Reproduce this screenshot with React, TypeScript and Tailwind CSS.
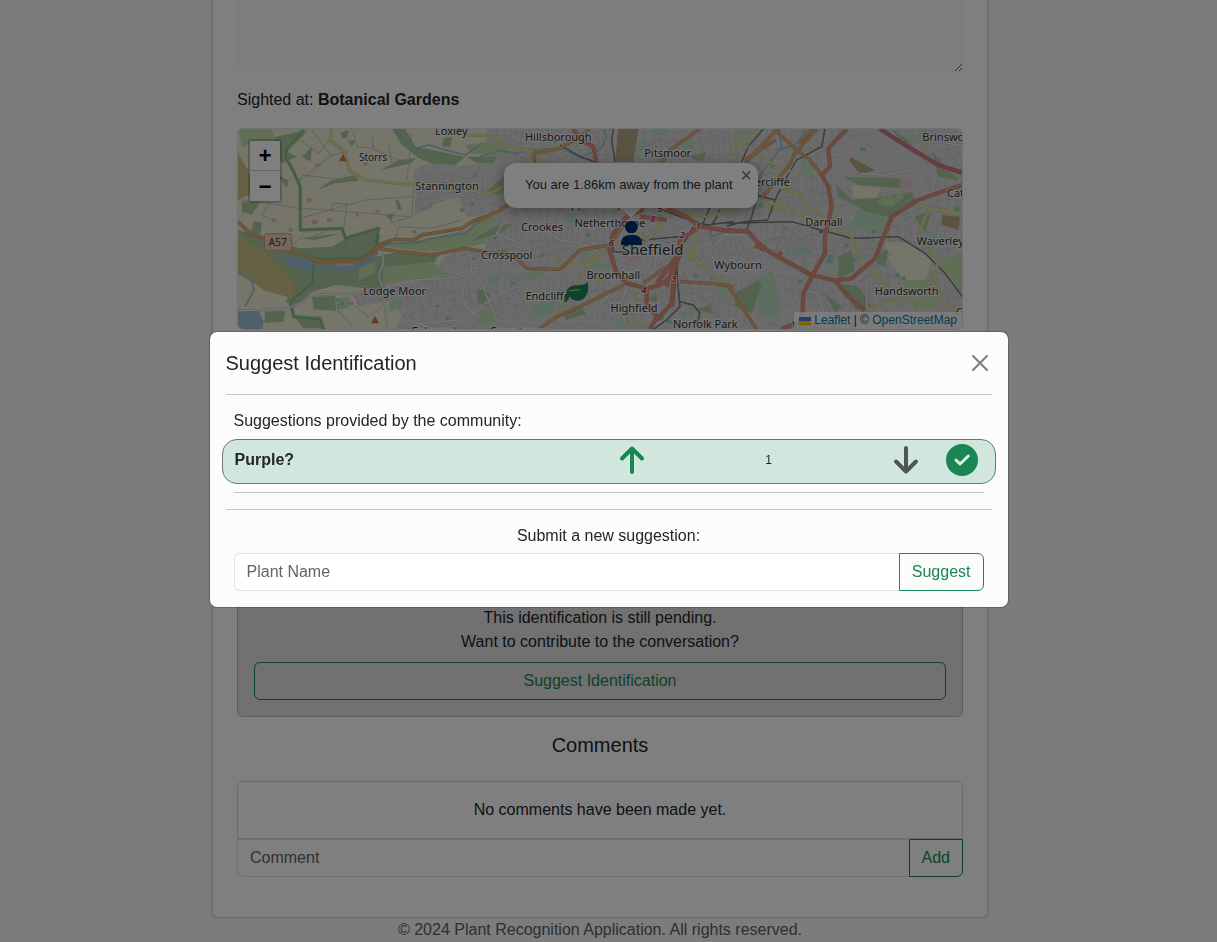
import React from "react";

type Shape = { fill: string; d: string };
type RoadKind = "trunk" | "primary" | "secondary" | "minor" | "motorway" | "rail" | "river" | "street" | "boundary";
type Road = { kind: RoadKind; d: string };
type Label = { text: string; x: number; y: number; anchor?: "start" | "middle" | "end"; size?: number };
type Tile = { offset: number; areas: Shape[]; roads: Road[]; labels: Label[] };

const C = {
  farm: "#ebead2",
  town: "#d8d7d8",
  wood: "#a6c79a",
  grass: "#c2dcac",
  park: "#b8dcbe",
  water: "#9cc0d6",
  moor: "#cdc088",
  retail: "#e0c8ce",
  school: "#8cd0b6",
  orchard: "#e8b89c",
  brown: "#b5a684",
};

const roadStyle: Record<RoadKind, { casing: string; fill: string; outer: number; inner: number }> = {
  motorway: { casing: "#c4607e", fill: "#d27890", outer: 13, inner: 9 },
  trunk: { casing: "#cc8872", fill: "#d9907c", outer: 13, inner: 9 },
  primary: { casing: "#c08e5c", fill: "#e0ae7e", outer: 10, inner: 6 },
  secondary: { casing: "#c2c288", fill: "#dedea4", outer: 9, inner: 6 },
  minor: { casing: "#bcbcbc", fill: "#ececec", outer: 7, inner: 4 },
  rail: { casing: "#6e6e6e", fill: "#808080", outer: 4, inner: 2 },
  river: { casing: "#94bad0", fill: "#a0c4d8", outer: 5, inner: 3 },
  street: { casing: "#b6b2b8", fill: "#c4c2c4", outer: 2, inner: 1 },
  boundary: { casing: "#a2c898", fill: "#80b07c", outer: 11, inner: 4 },
};

const order: RoadKind[] = ["street", "boundary", "river", "minor", "rail", "secondary", "primary", "trunk", "motorway"];

const west: Tile = {
  offset: 0,
  areas: [
    { fill: C.farm, d: "M0 0H760V660H0Z" },
    { fill: "url(#streets)", d: "M545 150 600 125 680 138 760 130V290L705 290 680 235 620 240 590 270 550 280Z" },
    { fill: "url(#streets)", d: "M640 410 700 385 760 400V660H470L510 590 480 540 380 560 360 520 450 500 540 490 620 470 615 440Z" },
    { fill: C.moor, d: "M18 100 45 145 62 190 50 225 18 240Z" },
    { fill: C.grass, d: "M18 27H120L140 100 90 60 30 80Z" },
    { fill: C.wood, d: "M130 50 225 30 215 45 165 95 195 110 150 130 120 90Z" },
    { fill: C.wood, d: "M30 245H85L60 285 30 275ZM65 305 90 308 85 345 55 340Z" },
    { fill: C.wood, d: "M18 330 100 350 200 385 300 380 350 350 440 330 435 370 410 415 500 395 620 405 600 440 470 480 450 510 310 495 240 515 190 560 160 545 185 510 160 460 110 440 80 405 30 390Z" },
    { fill: C.moor, d: "M18 345 65 375 110 410 165 455 190 500 180 535 100 512 18 460Z" },
    { fill: C.grass, d: "M440 375 570 360 700 330 760 290V370L690 385 600 395 520 390Z" },
    { fill: C.grass, d: "M380 440 430 425 430 460 380 480ZM455 440 600 425 650 465 540 480 450 495Z" },
    { fill: C.water, d: "M145 405 240 420 250 465 215 445 180 440ZM245 435 320 440 400 415 430 385 440 400 400 440 330 455 255 445Z" },
    { fill: C.water, d: "M18 572 80 572 95 605 90 630H18Z" },
    { fill: C.wood, d: "M98 575 160 572 155 605 98 608Z" },
    { fill: C.wood, d: "M240 530 310 528 312 572 245 568Z" },
    { fill: C.park, d: "M315 535 355 530 350 565 315 568Z" },
    { fill: C.wood, d: "M180 585 270 590 272 625 215 625Z" },
    { fill: C.wood, d: "M255 210 300 180 370 165 380 182 310 190ZM205 355 330 340 250 360ZM345 350 440 320 430 345 345 362Z" },
    { fill: C.wood, d: "M325 38 350 30 345 55 330 55ZM345 60 370 62 360 80ZM210 110 240 80 235 125ZM445 150 500 120 550 115 540 130ZM460 285 485 280 478 305ZM490 240 500 240 510 270 498 270ZM390 355 415 352 410 368ZM135 165 170 180 165 205ZM375 375 400 370 385 385Z" },
    { fill: C.wood, d: "M480 27H520L550 80 600 90 700 110 670 135 600 130 560 115 510 75ZM635 55 660 50 655 80 630 80Z" },
    { fill: C.orchard, d: "M250 130h14v10h-14zM225 235h14v12h-14zM240 300h18v12h-18zM120 295h12v10h-12zM285 295h14v10h-14zM370 280h10v10h-10zM430 270h12v8h-12zM170 325h12v10h-12zM115 355h10v8h-10zM395 128h12v8h-12zM350 370h14v10h-14zM540 330h12v10h-12zM260 600h14v10h-14zM350 545h14v10h-14z" },
    { fill: C.retail, d: "M310 430 370 425 365 437 315 440Z" },
    { fill: C.school, d: "M312 535h10v8h-10zM325 545h10v10h-10zM315 552h8v10h-8zM685 265h12v10h-12zM725 160h10v10h-10zM715 250h12v8h-12zM715 412h18v8h-18zM610 555h12v8h-12zM640 590h14v10h-14zM690 530h10v8h-10z" },
    { fill: C.park, d: "M470 545 505 535 515 560 475 575Z" },
  ],
  roads: [
    { kind: "street", d: "M18 238 110 250 205 265 345 275 530 290M110 250 90 285 140 310M300 275V250L345 252 335 320M205 295 400 240 540 230M365 40 375 80 425 85 420 50M200 185 300 105 350 95M200 185 210 165 340 180M205 60 260 100 300 50M240 30 300 110M540 40 525 180M470 70 480 130M230 355 290 330 330 320M185 375 220 335M350 395 380 365M420 85 520 130M330 490 320 430M310 560 360 620M370 560 410 590 450 560M545 285 600 250 640 240M470 310 540 290 545 190M490 360 500 320 600 325 690 300" },
    { kind: "boundary", d: "M215 30 165 85 160 110 185 155 205 200 205 330 330 325 340 355 440 325 430 365M440 345 430 390 380 415 250 415M245 425 240 490 175 545 185 590 265 600 275 630" },
    { kind: "river", d: "M495 27 510 60 550 85 590 75 640 90 700 105 750 70M18 460 60 480 65 510 40 560M760 290 700 340 600 355 545 370 470 370 440 385" },
    { kind: "minor", d: "M18 572 100 570 165 565 215 545 240 525 370 520 460 505 550 480 650 475 720 445 760 440M450 395 455 430 440 465 450 500 460 570 465 625M510 530 530 600 600 625M715 400 720 460 690 500 700 560 740 590M560 610 680 600 760 560" },
    { kind: "secondary", d: "M300 27 295 60 335 95 355 155 400 180 520 193 620 190 700 205 760 225M705 46H760" },
    { kind: "primary", d: "M18 305 60 345 100 355M165 390 230 410 260 425 380 425 410 410 440 385 500 395 600 405 700 385 760 395M420 390 450 370 490 358 545 360 570 345 690 325 720 305 760 290" },
  ],
  labels: [
    { text: "Loxley", x: 658, y: 46 },
    { text: "Storrs", x: 423, y: 122, size: 30 },
    { text: "Stannington", x: 645, y: 210 },
    { text: "Lodge Moor", x: 488, y: 524 },
    { text: "Fulwood", x: 605, y: 646 },
  ],
};

const centre: Tile = {
  offset: 744,
  areas: [
    { fill: "url(#streets)", d: "M16 0H760V660H16Z" },
    { fill: C.grass, d: "M-44 75 60 60 100 100 60 110 -30 100ZM130 90 240 75 230 100 150 115ZM45 230 110 160 100 215 60 240ZM-30 305 70 270 40 310 -20 345Z" },
    { fill: C.wood, d: "M20 215 90 150 110 160 60 225ZM-40 110 50 110 40 130 -10 130ZM330 190 390 215 350 240ZM-30 365 40 320 100 310 60 340Z" },
    { fill: C.brown, d: "M415 27H475L460 125H405Z" },
    { fill: C.park, d: "M475 60H500L495 90H470ZM525 110 545 108 540 128 520 128ZM600 60 640 50 640 85 610 90ZM510 27H570L560 45H520ZM260 280 290 285 290 310 260 305ZM300 400 325 395 330 420ZM330 425 400 430 380 450 340 445ZM100 480 180 440 210 450 160 480Z" },
    { fill: C.park, d: "M160 555 230 540 215 580 150 600ZM30 460 60 470 55 500 25 490ZM590 590 640 560 640 590ZM710 490 760 480V530H720ZM600 330 640 360 620 370ZM690 340 720 370 700 380ZM410 590 450 600 440 625H410Z" },
    { fill: C.grass, d: "M340 480 380 460 400 475 360 490ZM-20 580 40 560 60 590 20 620 -10 610ZM620 400 645 390 650 430 625 425Z" },
    { fill: C.wood, d: "M-10 505 30 520 20 560 -5 550ZM240 580 300 560 320 580 260 600ZM640 570 690 555 700 580ZM500 535 530 520 530 550ZM620 110 680 95 670 125Z" },
    { fill: C.school, d: "M215 60h14v10h-14zM190 130h10v10h-10zM65 390h14v10h-14zM40 350h10v8h-10zM180 400h12v10h-12zM90 485h14v8h-14zM320 340h12v10h-12zM420 320h10v10h-10zM640 460h12v14h-12zM560 600h14v10h-14zM690 470h12v8h-12zM240 510h10v8h-10zM540 590h12v10h-12z" },
    { fill: C.retail, d: "M430 410 470 400 460 430ZM650 340 690 330 700 345 660 350ZM540 440 570 430 565 460Z" },
  ],
  roads: [
    { kind: "street", d: "M120 110 150 150 200 160M250 130 320 170M360 60 330 130M480 90 540 60 600 120M500 320 560 370 620 360M440 330 500 350 490 380M500 420 550 480M660 400 700 450M600 440 640 520 700 560 740 630" },
    { kind: "river", d: "M0 110 60 90 110 100 160 90 240 85 300 110 360 90 380 50 370 27M700 300 690 350 750 330" },
    { kind: "minor", d: "M200 265 190 320 240 360 300 370 370 400M190 27 230 90 260 130M90 280 50 340 120 370 170 330 240 360M0 560 80 510 120 500 200 470 210 440M340 620 350 560 400 510M480 400 560 410 600 370M500 410 470 450 410 470M530 400 520 480M600 440 640 480M0 480 50 600M250 610 240 540 180 530M700 380 760 320M80 27 120 60M440 620 420 560 440 500" },
    { kind: "rail", d: "M400 27 395 60 405 125M535 265 600 290 680 315 760 305M640 320 600 390 590 450 600 560 560 600 520 628M600 545 640 555 660 580 650 610M400 355V395L480 400M480 360 540 355 600 350M240 75 300 110 350 128M700 310 720 270M590 430 580 560M665 320 690 260" },
    { kind: "secondary", d: "M0 45 50 50 100 85 160 95M160 110 150 150 170 130M0 225 40 215 70 200M150 120 170 150 130 180M480 380 395 372 330 420 260 440 200 400M460 330 500 360 540 320 530 290M360 395 330 440 260 520 230 600M450 500 470 540 460 590 490 628M610 370 680 450 760 510M650 330 640 400 660 440M560 270 680 290 760 270M545 130 580 80" },
    { kind: "primary", d: "M0 300 60 270 90 250M0 395 100 405 140 445 240 448 300 390 390 375 440 300M160 100 240 85 300 50 330 27M545 128 570 90 660 27M600 485 700 490 760 500M180 625 230 590 330 545 430 495M490 490 560 440M160 95 165 128" },
    { kind: "trunk", d: "M280 27 300 60 340 80 350 128M440 290 400 340 388 390 410 460 440 490 500 505 540 495 575 470 600 400 600 360 660 320 760 335M560 265 620 290 660 320M440 290 490 268M530 490 590 410M560 500 580 440M500 505 500 550 530 590 510 628M580 480 575 550 530 600M480 290 560 300" },
  ],
  labels: [
    { text: "Hillsborough", x: 235, y: 63 },
    { text: "Pitsmoor", x: 563, y: 111 },
    { text: "Upperthorpe", x: 350, y: 264 },
    { text: "Crookes", x: 186, y: 333 },
    { text: "Netherthorpe", x: 390, y: 320 },
    { text: "Crosspool", x: 80, y: 416 },
    { text: "Broomhall", x: 400, y: 477 },
    { text: "Endcliffe", x: 203, y: 541 },
    { text: "Highfield", x: 462, y: 575 },
    { text: "Norfolk Park", x: 676, y: 623 },
    { text: "Greystones", x: 115, y: 645 },
    { text: "Sheffield", x: 518, y: 405, size: 45 },
  ],
};

const east: Tile = {
  offset: 1479,
  areas: [
    { fill: "url(#streets)", d: "M5 0H760V660H5Z" },
    { fill: C.town, d: "M340 27H480L600 125 580 150 400 165 320 100ZM350 170H600L570 230 350 190Z" },
    { fill: C.wood, d: "M355 170 530 175 530 205 400 195ZM330 190 380 240 480 230 560 215 570 240 520 270 480 300 440 290 400 260 340 230Z" },
    { fill: C.grass, d: "M455 250 490 215 485 240 505 210 505 240 530 208 535 235 500 262Z" },
    { fill: C.farm, d: "M380 195 470 205 450 235 390 235ZM480 365 560 370 620 420 600 490 540 480 490 420ZM370 285 440 295 400 320Z" },
    { fill: C.brown, d: "M375 110 450 150 400 165 375 135ZM650 285 705 290 700 330 650 315Z" },
    { fill: C.park, d: "M400 270 490 290 480 340 430 330 360 330ZM230 120 270 130 260 180 230 170ZM60 30 90 40 60 90ZM200 440 250 430 240 460ZM180 395 250 370 245 410ZM90 480 150 450 165 590 110 590 100 540Z" },
    { fill: C.wood, d: "M100 480 110 500 80 580 30 560 30 520ZM340 410 380 390 390 450 340 480ZM350 490 400 500 440 560 390 570ZM300 520 350 560 330 580ZM460 400 490 390 480 440 455 430ZM620 90 660 140 700 180 640 170ZM570 290 620 270 600 340ZM500 27 550 60 580 110 540 80ZM130 120 150 130 140 150Z" },
    { fill: C.grass, d: "M640 430 712 395V520L660 470ZM540 480 620 480 600 520 540 510ZM130 245 180 240 170 275 130 270ZM560 540 640 520 630 560 570 570ZM190 90 230 80 220 110ZM310 280 340 290 335 320ZM20 40 60 35 30 80Z" },
    { fill: C.park, d: "M540 27 590 50 590 80ZM640 560 700 590 660 600ZM600 330 640 350 620 400ZM300 400 330 410 325 435 300 425Z" },
    { fill: C.school, d: "M310 405h16v8h-16zM305 418h20v10h-20zM385 415h12v10h-12zM405 82h16v12h-16zM360 370h10v12h-10zM510 460h14v10h-14zM530 470h12v10h-12zM510 600h12v10h-12zM100 250h16v12h-16zM690 260h14v14h-14zM220 480h12v10h-12zM440 330h14v10h-14z" },
    { fill: C.retail, d: "M525 180H560V210H525ZM160 400 175 410 160 425Z" },
  ],
  roads: [
    { kind: "street", d: "M60 120 110 150 90 200M170 310 220 360 280 340M180 320 150 400M210 380 260 400M130 360 180 350M330 130 360 160M400 490 500 400M340 27 400 60 480 100M470 340 560 290M30 120 80 180" },
    { kind: "river", d: "M160 27 170 80 140 120 110 160 90 210 50 250M240 27 220 70 165 90" },
    { kind: "minor", d: "M320 100 360 115 400 160 480 165 560 150 600 180 605 220 570 235M50 340 110 400 150 460 160 500 225 570M235 510 280 520 300 590M450 465 425 490 425 570M0 345 50 345M665 70 712 75" },
    { kind: "rail", d: "M300 27 290 80 215 120 180 180 150 240 130 295M115 27 70 80 50 125M100 220 80 290 60 340M5 310 200 305 270 325 380 355 520 350 600 400 660 460 712 530M5 318 60 305 130 300M90 225 150 240" },
    { kind: "secondary", d: "M70 80 130 125 200 155M160 200 230 225 250 260 300 290M110 240 200 270 330 325 380 350 400 400 470 480 490 510M595 27 600 120 660 145 712 165M470 548 540 540 625 480 640 425 580 350 600 290 620 265 712 280M630 470 650 545 700 580M420 575 470 548M0 110 70 60 100 27M560 250 620 265 700 285 712 275" },
    { kind: "primary", d: "M60 130 150 35 165 27M145 27 215 90 250 115 290 165M225 70 260 27M110 235 190 140 210 100 275 27M5 490 50 560 95 628M150 60 60 120" },
    { kind: "trunk", d: "M365 27 310 85 315 140 290 165 310 200 320 260 300 350 300 400 260 470 235 520 230 628M5 330 70 335 100 370 140 400 260 465 330 482 380 475 450 415 480 340 500 290 580 240 650 215 712 195M330 482 370 530 420 572M170 395 155 415M90 375 120 390M170 628 225 605" },
    { kind: "motorway", d: "M465 27 540 75 640 135 712 158" },
  ],
  labels: [
    { text: "Attercliffe", x: 195, y: 199, anchor: "end" },
    { text: "Brinsworth", x: 592, y: 62, anchor: "start" },
    { text: "Catcliffe", x: 666, y: 231, anchor: "start" },
    { text: "Darnall", x: 297, y: 317 },
    { text: "Waverley", x: 646, y: 374 },
    { text: "Wybourn", x: 39, y: 447 },
    { text: "Handsworth", x: 545, y: 525 },
    { text: "Orgreave", x: 692, y: 588, anchor: "start" },
    { text: "Woodthorpe", x: 202, y: 628, anchor: "start" },
  ],
};

const tiles = [west, centre, east];

const junctions = [
  { n: "5", x: 540, y: 277 },
  { n: "8", x: 519, y: 306 },
  { n: "1", x: 655, y: 328 },
  { n: "2", x: 607, y: 355 },
  { n: "6", x: 394, y: 378 },
  { n: "3", x: 581, y: 486 },
  { n: "4", x: 492, y: 518 },
];

function CityMap() {
  return (
    <svg className="absolute inset-0 h-full w-full" viewBox="18 27 2172 600" preserveAspectRatio="xMidYMid slice" aria-hidden="true">
      <defs>
        <pattern id="streets" width="170" height="150" patternUnits="userSpaceOnUse">
          <rect width="170" height="150" fill={C.town} />
          <path
            d="M0 20 35 28 60 10 95 22 130 8 170 20M0 62 28 55 50 70 90 58 120 72 170 62M0 110 40 100 66 118 110 104 140 120 170 110M35 28 28 55 40 100 30 150M60 10 58 0M95 22 90 58 110 104 100 150M130 8 120 72 140 120 150 150M12 24 10 60M48 20 50 70 66 118M75 16 72 64M108 18 104 64M148 13 152 66M15 60 18 106M82 60 86 110M155 64 158 113M8 109 12 140 40 128M66 118 60 150M0 84 35 80M50 90 100 84M122 92 170 88M86 130 120 135"
            fill="none"
            stroke="#c0bec2"
            strokeWidth="2"
          />
        </pattern>
      </defs>
      {tiles.map((t) => (
        <g key={t.offset} transform={`translate(${t.offset} 0)`}>
          {t.areas.map((a, i) => (
            <path key={i} d={a.d} fill={a.fill} />
          ))}
        </g>
      ))}
      {order.map((kind) => (
        <g key={kind} fill="none" strokeLinejoin="round">
          {(["casing", "fill"] as const).map((layer) =>
            tiles.map((t) => (
              <g key={layer + t.offset} transform={`translate(${t.offset} 0)`}>
                {t.roads
                  .filter((r) => r.kind === kind)
                  .map((r, i) => (
                    <path
                      key={i}
                      d={r.d}
                      stroke={roadStyle[kind][layer]}
                      strokeWidth={layer === "casing" ? roadStyle[kind].outer : roadStyle[kind].inner}
                    />
                  ))}
              </g>
            )),
          )}
        </g>
      ))}
      <path d="M333 102 345 124H321ZM429 588 441 610H417Z" fill="#c87840" />
      <path d="M1761 328h12v12h-12z" fill="#7389c4" />
      <rect x="98" y="341" width="81" height="50" rx="6" fill="#e8d0b8" stroke="#d09a74" strokeWidth="3" />
      <g fontFamily="Noto Sans, sans-serif" textAnchor="middle" paintOrder="stroke" stroke="#ffffff" strokeOpacity="0.6" strokeWidth="7" strokeLinejoin="round" fill="#303030">
        <text x="137" y="378" fontSize="31" fill="#5c3418" strokeWidth="0">
          A57
        </text>
        {tiles.map((t) =>
          t.labels.map((l) => (
            <text key={l.text} x={l.x + t.offset} y={l.y} fontSize={l.size ?? 33} textAnchor={l.anchor ?? "middle"}>
              {l.text}
            </text>
          )),
        )}
        {junctions.map((j) => (
          <text key={j.n} x={j.x + 744} y={j.y} fontSize="29" fontStyle="italic" fontWeight="600" fill="#b0283c">
            {j.n}
          </text>
        ))}
      </g>
      <g transform="translate(744 0)">
        <circle cx="454" cy="321" r="19" fill="#002d74" />
        <path d="M423 375V371C423 355 434 345 450 345H460C476 345 486 355 486 371V375Z" fill="#002d74" />
        <path d="M323 486C314 496 300 495 285 496C267 498 258 510 259 523C255 531 253 538 253 545L261 546C262 540 265 535 270 531C280 546 305 546 316 530C325 518 327 500 323 486Z" fill="#198754" />
        <path d="M268 513C278 510 288 510 299 510" fill="none" stroke="#cfdcb8" strokeWidth="3" strokeLinecap="round" />
      </g>
    </svg>
  );
}

function MapPanel() {
  return (
    <div className="relative mt-4 h-[202px] overflow-hidden rounded-md border border-[#dee2e6] text-[13px] text-[#333333]">
      <CityMap />
      <div className="absolute top-[10px] left-[10px] flex flex-col rounded-sm border-2 border-black/20">
        <button type="button" aria-label="Zoom in" className="h-[30px] w-[30px] border-b border-[#cccccc] bg-white pt-[5px] font-['Liberation_Mono',monospace] text-[22px] leading-6 font-bold text-black">
          +
        </button>
        <button type="button" aria-label="Zoom out" className="h-[30px] w-[30px] bg-white pt-[5px] font-['Liberation_Mono',monospace] text-[22px] leading-6 font-bold text-black">
          −
        </button>
      </div>
      <div className="absolute top-[34px] left-[266px] w-[254px]">
        <div className="relative rounded-xl bg-white pt-3 pr-5 pb-[14px] pl-[21px] leading-[19px] whitespace-nowrap shadow-[0_3px_14px_rgba(0,0,0,0.4)]">
          You are 1.86km away from the plant
          <button type="button" aria-label="Close popup" className="absolute top-0 right-0 h-6 w-6 text-center text-[20px] leading-6 text-[#757575]">
            ×
          </button>
        </div>
        <svg className="mx-auto block h-[10px] w-5" viewBox="0 0 20 10" aria-hidden="true">
          <path d="M0 0H20L10 10Z" fill="#ffffff" />
        </svg>
      </div>
      <div className="absolute right-0 bottom-0 flex items-center gap-[3px] bg-white/80 px-[5px] text-[12px] leading-[17px]">
        <svg className="h-2 w-3" viewBox="0 0 12 8" aria-hidden="true">
          <path fill="#4C7BE1" d="M0 0h12v4H0z" />
          <path fill="#FFD500" d="M0 4h12v3H0z" />
          <path fill="#E0BC00" d="M0 7h12v1H0z" />
        </svg>
        <span>
          <a href="#leaflet" className="text-[#0078a8]">Leaflet</a> | © <a href="#osm" className="text-[#0078a8]">OpenStreetMap</a>
        </span>
      </div>
    </div>
  );
}

function SuggestionRow() {
  return (
    <div className="-mx-3 flex h-[45px] items-center rounded-[15px] border border-[#6c757d] bg-[#d1e7dd] pr-[17px] pl-3">
      <div className="grow basis-[382px] pb-1 font-bold">Purple?</div>
      <button type="button" aria-label="Vote up" className="pb-1">
        <svg className="h-8 w-8" viewBox="0 0 32 32" fill="none" stroke="#198754" strokeWidth="4" strokeLinecap="round" strokeLinejoin="round" aria-hidden="true">
          <path d="M16 28V5M6 14.5 16 4.5 26 14.5" />
        </svg>
      </button>
      <div className="grow basis-[242px] pb-1 text-center text-xs">1</div>
      <button type="button" aria-label="Vote down" className="pb-1">
        <svg className="h-8 w-8" viewBox="0 0 32 32" fill="none" stroke="#4c5656" strokeWidth="4" strokeLinecap="round" strokeLinejoin="round" aria-hidden="true">
          <path d="M16 4V27M6 17.5 16 27.5 26 17.5" />
        </svg>
      </button>
      <button type="button" aria-label="Approve suggestion" className="pb-1 pl-6">
        <svg className="h-8 w-8" viewBox="0 0 32 32" aria-hidden="true">
          <circle cx="16" cy="16" r="16" fill="#198754" />
          <path d="M10 16 14 20 22.3 12" fill="none" stroke="#e0efe8" strokeWidth="3" strokeLinecap="round" strokeLinejoin="round" />
        </svg>
      </button>
    </div>
  );
}

function SuggestModal() {
  return (
    <div className="fixed inset-0 flex items-center justify-center bg-black/50 pb-[3px]">
      <div role="dialog" aria-modal="true" aria-labelledby="modal-title" className="w-full max-w-[800px] rounded-lg border border-black/20 bg-[#fcfcfc] bg-clip-padding p-4">
        <div className="flex items-center justify-between">
          <h1 id="modal-title" className="text-xl leading-[30px]">Suggest Identification</h1>
          <button type="button" aria-label="Close">
            <svg className="h-6 w-6 p-1" viewBox="0 0 16 16" stroke="#7d7d7d" strokeWidth="2" strokeLinecap="round" aria-hidden="true">
              <path d="M1 1 15 15M15 1 1 15" />
            </svg>
          </button>
        </div>
        <hr className="mt-4 border-[#c5c6c7]" />
        <div className="px-2 pt-[14px]">
          <p className="pb-[6px]">Suggestions provided by the community:</p>
          <SuggestionRow />
          <hr className="mt-2 border-[#c5c6c7]" />
        </div>
        <hr className="mt-4 border-[#c5c6c7]" />
        <form className="px-2 pt-[14px]" onSubmit={(e) => e.preventDefault()}>
          <label htmlFor="plant-name" className="block pb-[5px] text-center">Submit a new suggestion:</label>
          <div className="flex">
            <input id="plant-name" placeholder="Plant Name" className="h-[38px] min-w-0 grow rounded-l-md border border-r-0 border-[#dee2e6] bg-white px-3 placeholder:text-[#5f6468]" />
            <button type="submit" className="rounded-r-md border border-[#198754] px-3 text-[#198754]">Suggest</button>
          </div>
        </form>
      </div>
    </div>
  );
}

export default function App() {
  return (
    <div className="min-h-screen bg-[#f6f6f6] pr-[17px] font-['Liberation_Sans',Arial,sans-serif] text-base leading-6 text-[#212529]">
      <main className="mx-auto max-w-[776px] rounded-b-md border border-t-0 border-[#d4d4d5] bg-white px-6 pb-10 shadow-sm">
        <textarea aria-label="Description" readOnly className="block h-[72px] w-full resize-y rounded-b-md bg-[#fafafa]" />
        <p className="mt-4">
          Sighted at: <strong>Botanical Gardens</strong>
        </p>
        <MapPanel />
        <section className="mt-[259px] rounded-md border border-[#bcbcbc] bg-[#e2e2e2] p-4 text-center">
          <p>This identification is still pending.</p>
          <p>Want to contribute to the conversation?</p>
          <button type="button" className="mt-2 h-[38px] w-full rounded-md border border-[#198754] text-[#198754]">Suggest Identification</button>
        </section>
        <h2 className="mt-4 text-center text-xl leading-6">Comments</h2>
        <p className="mt-6 rounded-t-md border border-[#d4d4d5] p-4 text-center">No comments have been made yet.</p>
        <form className="flex" onSubmit={(e) => e.preventDefault()}>
          <input aria-label="Comment" placeholder="Comment" className="h-[38px] min-w-0 grow rounded-bl-md border border-r-0 border-[#dee2e6] bg-white px-3 placeholder:text-[#5f6468]" />
          <button type="submit" className="rounded-br-md border border-[#198754] px-3 text-[#198754]">Add</button>
        </form>
      </main>
      <footer className="bg-[#f9f9f9] text-center text-[#5a5e63]">© 2024 Plant Recognition Application. All rights reserved.</footer>
      <SuggestModal />
    </div>
  );
}
